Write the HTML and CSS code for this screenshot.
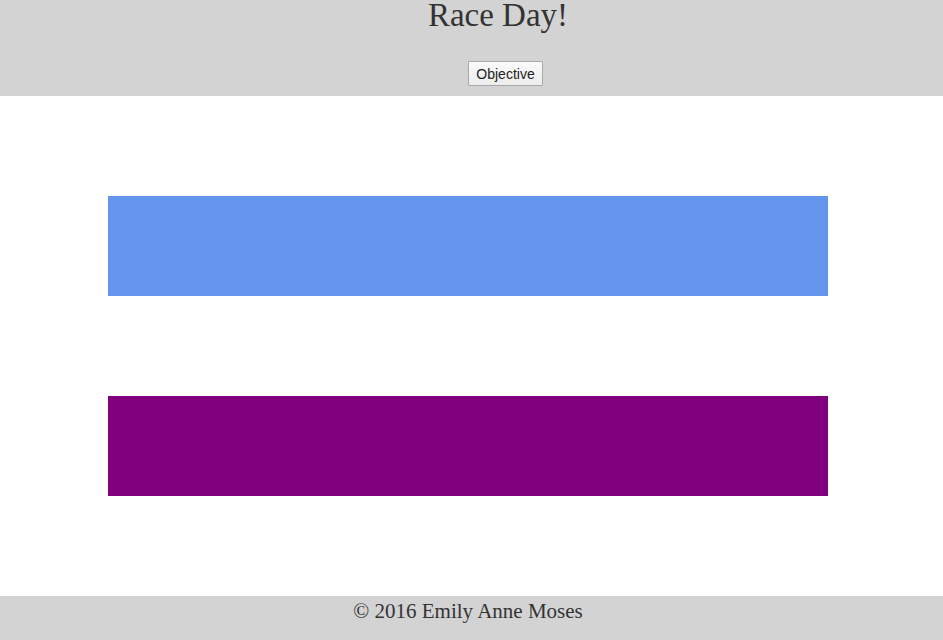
FILE: index.html
```html
<!DOCTYPE html>
<html>
<head>
<meta charset="utf-8">
<title>Race Day!</title>
<link rel="stylesheet" href="styles.css">
</head>
<body>
<header class="top">
  <h1 class="title">Race Day!</h1>
  <div class="actions"><button class="btn">Objective</button></div>
</header>
<main class="track">
  <div class="lane lane-blue"></div>
  <div class="lane lane-purple"></div>
</main>
<footer class="foot">
  <p class="copy">© 2016 Emily Anne Moses</p>
</footer>
</body>
</html>
```
FILE: styles.css
```css
html, body {
  margin: 0;
  padding: 0;
  background: #fff;
  color: #333;
  font-family: "Liberation Serif", "Times New Roman", serif;
}
.top {
  background: #d3d3d3;
  height: 96px;
  box-sizing: border-box;
  display: flex;
  flex-direction: column;
}
.title {
  margin: 0;
  font-weight: normal;
  font-size: 33px;
  line-height: 30px;
  height: 30px;
  text-align: center;
  padding-left: 53px;
}
.actions {
  margin-top: 31px;
  display: flex;
  justify-content: center;
  padding-left: 68px;
}
.btn {
  width: 75px;
  height: 25px;
  box-sizing: border-box;
  font-family: "Liberation Sans", Arial, sans-serif;
  font-size: 14px;
  color: #222;
  background: linear-gradient(#fbfbfb, #ececec);
  border: 1px solid #a9a9a9;
  border-radius: 1px;
  padding: 0;
}
.track {
  height: 500px;
  box-sizing: border-box;
  padding: 100px 0 100px 108px;
  display: flex;
  flex-direction: column;
  gap: 100px;
}
.lane {
  width: 720px;
  height: 100px;
}
.lane-blue { background: #6495ed; }
.lane-purple { background: #800080; }
.foot {
  background: #d3d3d3;
  height: 44px;
  box-sizing: border-box;
  padding-top: 3px;
}
.copy {
  margin: 0;
  font-size: 21px;
  line-height: 24px;
  text-align: center;
  padding-right: 7px;
}
```
